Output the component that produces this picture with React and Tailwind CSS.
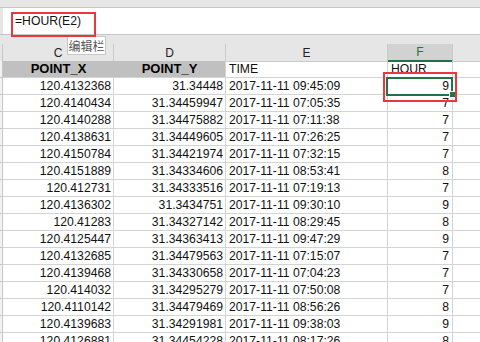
const rows = [
  ["120.4132368", "31.34448", "2017-11-11 09:45:09", "9"],
  ["120.4140434", "31.34459947", "2017-11-11 07:05:35", "7"],
  ["120.4140288", "31.34475882", "2017-11-11 07:11:38", "7"],
  ["120.4138631", "31.34449605", "2017-11-11 07:26:25", "7"],
  ["120.4150784", "31.34421974", "2017-11-11 07:32:15", "7"],
  ["120.4151889", "31.34334606", "2017-11-11 08:53:41", "8"],
  ["120.412731", "31.34333516", "2017-11-11 07:19:13", "7"],
  ["120.4136302", "31.3434751", "2017-11-11 09:30:10", "9"],
  ["120.41283", "31.34327142", "2017-11-11 08:29:45", "8"],
  ["120.4125447", "31.34363413", "2017-11-11 09:47:29", "9"],
  ["120.4132685", "31.34479563", "2017-11-11 07:15:07", "7"],
  ["120.4139468", "31.34330658", "2017-11-11 07:04:23", "7"],
  ["120.414032", "31.34295279", "2017-11-11 07:50:08", "7"],
  ["120.4110142", "31.34479469", "2017-11-11 08:56:26", "8"],
  ["120.4139683", "31.34291981", "2017-11-11 09:38:03", "9"],
  ["120.4126881", "31.34454228", "2017-11-11 08:17:26", "8"],
];

const grid = "grid grid-cols-[3px_111px_112px_162px_65px_27px] h-[17px]";

export default function App() {
  return (
    <div className="relative w-[480px] h-[342px] overflow-hidden bg-white font-['Liberation_Sans',Arial,sans-serif] text-[12.2px] text-[#111] leading-[16px]">
      {/* top band */}
      <div className="h-[8px] bg-[#e6e6e6] border-b border-[#c6c6c6]" />
      {/* formula bar */}
      <div className="flex h-[27px]">
        <div className="w-[3px] bg-[#e6e6e6] border-b border-[#c6c6c6]" />
        <div className="flex-1 bg-white border-b border-[#c6c6c6] pl-[12px] flex items-center">
          =HOUR(E2)
        </div>
      </div>
      {/* gap */}
      <div className="h-[9px] bg-[#e6e6e6]" />
      {/* column headers */}
      <div className={grid + " bg-[#e6e6e6] text-[12px] text-[#222]"}>
        <div className="border-r border-b border-[#c6c6c6]" />
        <div className="border-r border-b border-[#cacaca] flex items-center justify-center">C</div>
        <div className="border-r border-b border-[#cacaca] flex items-center justify-center">D</div>
        <div className="border-r border-b border-[#cacaca] flex items-center justify-center">E</div>
        <div className="bg-[#d2d2d2] border-r border-[#cacaca] border-b-2 border-b-[#217346] text-[#217346] flex items-center justify-center">F</div>
        <div className="border-b border-[#cacaca]" />
      </div>
      {/* header row */}
      <div className={grid}>
        <div className="bg-[#f2f2f2] border-r border-b border-[#c6c6c6]" />
        <div className="bg-[#c0c0c0] border-b border-[#d4d4d4] font-bold text-[13px] text-black flex items-center justify-center">POINT_X</div>
        <div className="bg-[#c0c0c0] border-r border-b border-[#d4d4d4] font-bold text-[13px] text-black flex items-center justify-center">POINT_Y</div>
        <div className="border-r border-b border-[#d4d4d4] pl-[3px] flex items-center">TIME</div>
        <div className="border-r border-b border-[#d4d4d4] pl-[3px] flex items-center">HOUR</div>
        <div className="border-b border-[#d4d4d4]" />
      </div>
      {rows.map((r, i) => (
        <div key={i} className={grid}>
          <div className="bg-[#f2f2f2] border-r border-b border-[#c6c6c6]" />
          <div className="border-r border-b border-[#d4d4d4] pr-[2px] flex items-center justify-end">{r[0]}</div>
          <div className="border-r border-b border-[#d4d4d4] pr-[2px] flex items-center justify-end">{r[1]}</div>
          <div className="border-r border-b border-[#d4d4d4] pl-[3px] flex items-center">{r[2]}</div>
          <div className="border-r border-b border-[#d4d4d4] pr-[3px] flex items-center justify-end">{r[3]}</div>
          <div className="border-b border-[#d4d4d4]" />
        </div>
      ))}

      {/* selected cell */}
      <div className="absolute left-[386px] top-[77px] w-[67px] h-[19px] border-2 border-[#217346]" />
      <div className="absolute left-[449px] top-[91px] w-[7px] h-[7px] bg-[#217346] border border-white" />

      {/* tooltip */}
      <div className="absolute left-[67px] top-[36px] w-[39px] h-[19px] bg-white border border-[#c8c8c8] text-[12px] text-[#575757] font-['Noto_Sans_CJK_SC',sans-serif] leading-[17px] text-center">
        编辑栏
      </div>

      {/* red annotation boxes */}
      <div className="absolute left-[11px] top-[12px] w-[85px] h-[25px] border-2 border-[#e8383d]" />
      <div className="absolute left-[383px] top-[72px] w-[74px] h-[30px] border-2 border-[#e8383d]" />
    </div>
  );
}
